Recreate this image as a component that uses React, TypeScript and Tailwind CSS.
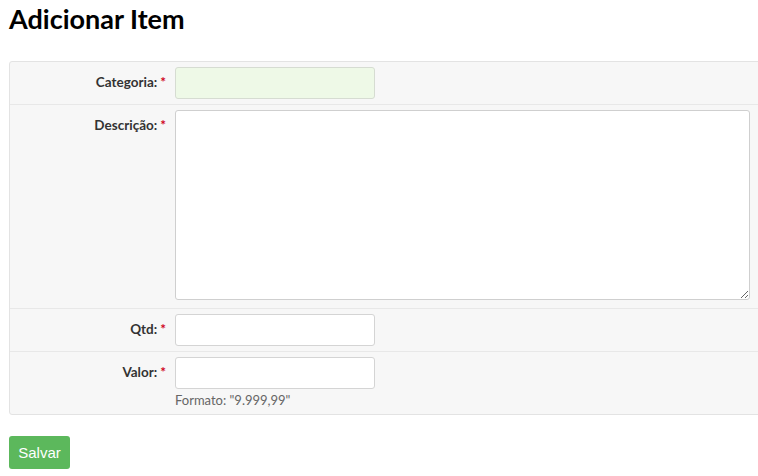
export default function App() {
  const labelCls =
    "w-[156px] shrink-0 text-right pt-[6px] text-[13.5px] font-bold text-[#333] leading-[19px]";
  const star = <span className="ml-[3px] text-[#d0021b] font-bold">*</span>;
  return (
    <div className="w-[758px] h-[476px] overflow-hidden bg-white font-['Lato','Noto_Sans',sans-serif]">
      <h1 className="ml-[9px] pt-[4px] text-[27px] font-bold leading-[30px] text-black">
        Adicionar Item
      </h1>
      <div className="mt-[27px] ml-[9px] w-[780px] border border-[#e3e3e3] rounded-[3px] bg-[#f7f7f7]">
        <div className="flex gap-[9px] py-[5px] border-b border-[#e8e8e8]">
          <div className={labelCls}>Categoria:{star}</div>
          <div className="w-[200px] h-[32px] rounded-[3px] border border-[#d6dcd2] bg-[#eef9e7]" />
        </div>
        <div className="flex gap-[9px] pt-[5px] pb-[8px] border-b border-[#e8e8e8]">
          <div className={labelCls}>Descrição:{star}</div>
          <textarea className="block w-[575px] h-[190px] rounded-[3px] border border-[#cfcfcf] bg-white outline-none" />
        </div>
        <div className="flex gap-[9px] py-[5px] border-b border-[#e8e8e8]">
          <div className={labelCls}>Qtd:{star}</div>
          <div className="w-[200px] h-[32px] rounded-[3px] border border-[#d4d4d4] bg-white" />
        </div>
        <div className="flex gap-[9px] pt-[5px] pb-[4px]">
          <div className={labelCls}>Valor:{star}</div>
          <div className="flex flex-col">
            <div className="w-[200px] h-[32px] rounded-[3px] border border-[#d4d4d4] bg-white" />
            <div className="mt-[2px] text-[13px] leading-[19px] text-[#666]">
              Formato: "9.999,99"
            </div>
          </div>
        </div>
      </div>
      <button className="mt-[21px] ml-[9px] h-[33px] w-[61px] rounded-[3px] bg-[#5cb85c] text-white text-[15px] font-['Liberation_Sans',Arial,sans-serif] leading-[33px]">
        Salvar
      </button>
    </div>
  );
}
